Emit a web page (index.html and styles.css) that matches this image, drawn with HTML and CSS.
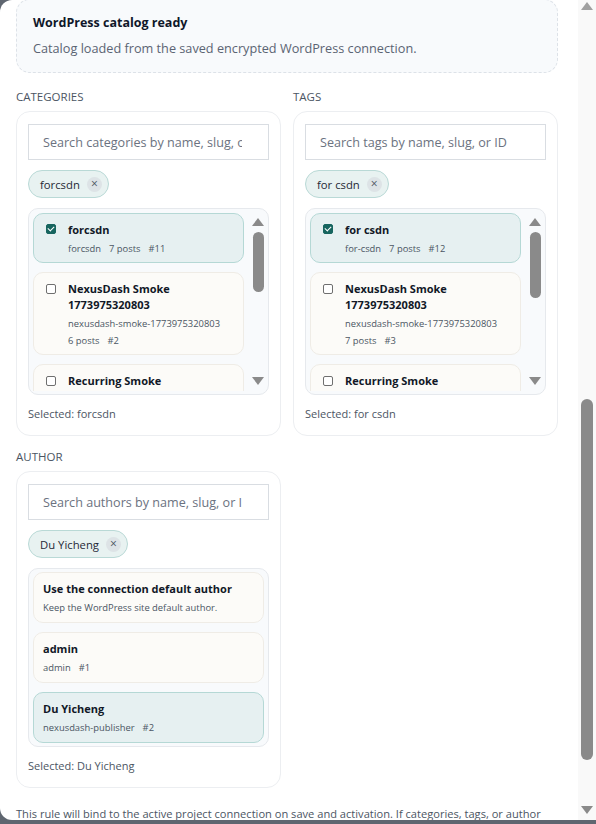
FILE: index.html
```html
<!DOCTYPE html>
<html lang="en">
<head>
<meta charset="utf-8">
<title>WordPress catalog</title>
<link rel="stylesheet" href="styles.css">
</head>
<body>
<div class="dialog">
  <div class="viewport">
    <div class="content">
      <div class="notice">
        <div class="notice-title">WordPress catalog ready</div>
        <div class="notice-text">Catalog loaded from the saved encrypted WordPress connection.</div>
      </div>

      <div class="grid">
        <div class="field">
          <div class="label">CATEGORIES</div>
          <div class="card">
            <input class="search" type="text" placeholder="Search categories by name, slug, or ID">
            <div class="chips"><span class="chip">forcsdn <span class="chip-x">×</span></span></div>
            <div class="list list-scroll">
              <div class="items">
                <div class="item selected">
                  <span class="check on"></span>
                  <div class="item-body">
                    <div class="item-title">forcsdn</div>
                    <div class="meta"><span>forcsdn</span><span>7 posts</span><span>#11</span></div>
                  </div>
                </div>
                <div class="item">
                  <span class="check"></span>
                  <div class="item-body">
                    <div class="item-title">NexusDash Smoke 1773975320803</div>
                    <div class="meta"><span>nexusdash-smoke-1773975320803</span><span>6 posts</span><span>#2</span></div>
                  </div>
                </div>
                <div class="item">
                  <span class="check"></span>
                  <div class="item-body">
                    <div class="item-title">Recurring Smoke</div>
                    <div class="meta"><span>recurring-smoke</span><span>1 posts</span><span>#5</span></div>
                  </div>
                </div>
              </div>
              <div class="mini-bar">
                <span class="tri up"></span>
                <div class="mini-track"><div class="mini-thumb"></div></div>
                <span class="tri down"></span>
              </div>
            </div>
            <div class="selected-text">Selected: forcsdn</div>
          </div>
        </div>

        <div class="field">
          <div class="label">TAGS</div>
          <div class="card">
            <input class="search" type="text" placeholder="Search tags by name, slug, or ID">
            <div class="chips"><span class="chip">for csdn <span class="chip-x">×</span></span></div>
            <div class="list list-scroll">
              <div class="items">
                <div class="item selected">
                  <span class="check on"></span>
                  <div class="item-body">
                    <div class="item-title">for csdn</div>
                    <div class="meta"><span>for-csdn</span><span>7 posts</span><span>#12</span></div>
                  </div>
                </div>
                <div class="item">
                  <span class="check"></span>
                  <div class="item-body">
                    <div class="item-title">NexusDash Smoke 1773975320803</div>
                    <div class="meta"><span>nexusdash-smoke-1773975320803</span><span>7 posts</span><span>#3</span></div>
                  </div>
                </div>
                <div class="item">
                  <span class="check"></span>
                  <div class="item-body">
                    <div class="item-title">Recurring Smoke</div>
                    <div class="meta"><span>recurring-smoke</span><span>1 posts</span><span>#6</span></div>
                  </div>
                </div>
              </div>
              <div class="mini-bar">
                <span class="tri up"></span>
                <div class="mini-track"><div class="mini-thumb thumb-tags"></div></div>
                <span class="tri down"></span>
              </div>
            </div>
            <div class="selected-text">Selected: for csdn</div>
          </div>
        </div>

        <div class="field">
          <div class="label">AUTHOR</div>
          <div class="card">
            <input class="search" type="text" placeholder="Search authors by name, slug, or ID">
            <div class="chips"><span class="chip">Du Yicheng <span class="chip-x">×</span></span></div>
            <div class="list">
              <div class="items">
                <div class="item author">
                  <div class="item-body">
                    <div class="item-title">Use the connection default author</div>
                    <div class="meta"><span>Keep the WordPress site default author.</span></div>
                  </div>
                </div>
                <div class="item author">
                  <div class="item-body">
                    <div class="item-title">admin</div>
                    <div class="meta"><span>admin</span><span>#1</span></div>
                  </div>
                </div>
                <div class="item author selected">
                  <div class="item-body">
                    <div class="item-title">Du Yicheng</div>
                    <div class="meta"><span>nexusdash-publisher</span><span>#2</span></div>
                  </div>
                </div>
              </div>
            </div>
            <div class="selected-text">Selected: Du Yicheng</div>
          </div>
        </div>
      </div>

      <p class="footer">This rule will bind to the active project connection on save and activation. If categories, tags, or author selections are missing, the connection defaults are used.</p>
    </div>
  </div>
  <div class="scrollbar">
    <span class="tri up big"></span>
    <div class="track"><div class="thumb"></div></div>
    <span class="tri down big"></span>
  </div>
</div>
</body>
</html>
```

FILE: styles.css
```css
* { box-sizing: border-box; }

html, body {
  margin: 0;
  padding: 0;
  height: 100%;
}

body {
  background: #5f6670;
  font-family: "Open Sans", "Noto Sans", sans-serif;
  color: #111827;
  overflow: hidden;
}

.dialog {
  display: flex;
  width: 596px;
  height: 820px;
  background: #ffffff;
  border-radius: 12px 0 0 12px;
  overflow: hidden;
}

.viewport {
  flex: 1;
  min-width: 0;
  overflow: hidden;
}

.content {
  margin-top: -1px;
  padding: 0 20px 0 16px;
}

.notice {
  border: 1px dashed #dde2e8;
  border-radius: 14px;
  background: #f8fafc;
  padding: 14px 16px 15px;
}

.notice-title {
  font-size: 12.5px;
  font-weight: 700;
  line-height: 18px;
  color: #0f172a;
}

.notice-text {
  margin-top: 7px;
  font-size: 12.7px;
  line-height: 18px;
  color: #5b6473;
}

.grid {
  margin-top: 16px;
  display: grid;
  grid-template-columns: minmax(0, 1fr) minmax(0, 1fr);
  column-gap: 12px;
  row-gap: 13px;
}

.field {
  min-width: 0;
  display: flex;
  flex-direction: column;
  gap: 6px;
}

.label {
  font-size: 11.5px;
  line-height: 16px;
  color: #4b5563;
}

.card {
  min-width: 0;
  border: 1px solid #eceef1;
  border-radius: 14px;
  background: #fff;
  padding: 12px 11px;
  display: flex;
  flex-direction: column;
  gap: 10px;
}

.search {
  display: block;
  width: 100%;
  height: 36px;
  margin: 0;
  border: 1px solid #d9dde2;
  border-radius: 0;
  padding: 0 26px 0 14px;
  font-family: inherit;
  font-size: 12.6px;
  color: #111827;
  background: #fff;
  outline: none;
}

.search::placeholder {
  color: #6b7280;
  opacity: 1;
}

.chips {
  display: flex;
}

.chip {
  display: inline-flex;
  align-items: center;
  gap: 7px;
  height: 28px;
  padding: 0 6px 0 11px;
  border: 1px solid #b9d9d6;
  border-radius: 14px;
  background: #e8f2f1;
  font-size: 11.3px;
  color: #1f2937;
}

.chip-x {
  width: 15px;
  height: 15px;
  border-radius: 50%;
  background: #dde3e6;
  display: inline-flex;
  align-items: center;
  justify-content: center;
  font-size: 12px;
  line-height: 1;
  color: #4b5563;
}

.list {
  border: 1px solid #e6e9ed;
  border-radius: 10px;
  background: #f8fafc;
  padding: 3px 4px;
  display: flex;
  overflow: hidden;
}

.list-scroll {
  height: 187px;
  padding-right: 0;
}

.items {
  flex: 1;
  min-width: 0;
  display: flex;
  flex-direction: column;
  gap: 9px;
  overflow: hidden;
}

.list-scroll .items {
  margin-top: 1px;
  margin-right: 4px;
}

.item {
  flex: none;
  display: flex;
  gap: 12px;
  border: 1px solid #efece6;
  border-radius: 10px;
  background: #fcfbf8;
  padding: 8px 10px 6px 12px;
}

.item.author {
  padding: 8px 9px 7px;
}

.item.selected {
  background: #e6f0f1;
  border-color: #b5d8d5;
}

.check {
  flex: none;
  width: 10px;
  height: 10px;
  margin-top: 3px;
  border: 1px solid #6f6f6f;
  border-radius: 2px;
  background: #fff;
  position: relative;
}

.check.on {
  margin-top: 2px;
  border-color: #17655f;
  background: #17655f;
}

.check.on::after {
  content: "";
  position: absolute;
  left: 2px;
  top: 0px;
  width: 3px;
  height: 5px;
  border: solid #fff;
  border-width: 0 1.5px 1.5px 0;
  transform: rotate(45deg);
}

.item-body {
  min-width: 0;
  display: flex;
  flex-direction: column;
  gap: 4px;
}

.item-title {
  font-size: 11px;
  font-weight: 700;
  line-height: 16px;
  color: #111827;
}

.meta {
  display: flex;
  flex-wrap: wrap;
  column-gap: 8px;
  row-gap: 3px;
  font-size: 9.4px;
  line-height: 14px;
  color: #4b5563;
}

.mini-bar {
  flex: none;
  width: 20px;
  display: flex;
  flex-direction: column;
  align-items: center;
  padding: 6px 0 6px;
}

.mini-track {
  flex: 1;
  width: 100%;
  display: flex;
  justify-content: center;
  padding-top: 6px;
}

.mini-thumb {
  width: 11px;
  height: 60px;
  border-radius: 6px;
  background: #8a8a8a;
}

.mini-thumb.thumb-tags {
  height: 66px;
}

.tri {
  width: 0;
  height: 0;
  border-left: 6px solid transparent;
  border-right: 6px solid transparent;
}

.tri.up {
  border-bottom: 8px solid #8a8a8a;
}

.tri.down {
  border-top: 8px solid #8a8a8a;
}

.tri.big.up {
  border-bottom-color: #a0a0a0;
}

.tri.big.down {
  border-top-color: #8a8a8a;
}

.selected-text {
  font-size: 11px;
  line-height: 18px;
  color: #4b5563;
}

.footer {
  margin: 18px 0 0;
  font-size: 11.1px;
  line-height: 16px;
  color: #4b5563;
}

.scrollbar {
  flex: none;
  width: 18px;
  background: #f9f9f9;
  display: flex;
  flex-direction: column;
  align-items: center;
  padding: 2px 0 6px;
}

.scrollbar .track {
  flex: 1;
  width: 100%;
  display: flex;
  justify-content: center;
}

.scrollbar .thumb {
  width: 12px;
  height: 361px;
  margin-top: 389px;
  border-radius: 6px;
  background: #8a8a8a;
}
```
